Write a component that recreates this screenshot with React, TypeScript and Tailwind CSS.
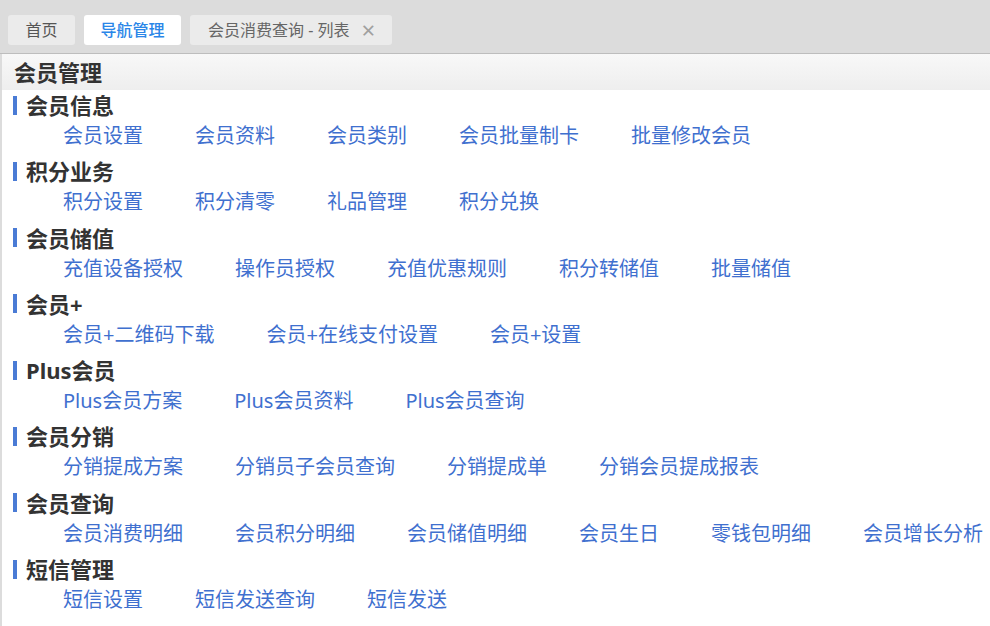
const sections: { title: string; links: string[] }[] = [
  { title: "会员信息", links: ["会员设置", "会员资料", "会员类别", "会员批量制卡", "批量修改会员"] },
  { title: "积分业务", links: ["积分设置", "积分清零", "礼品管理", "积分兑换"] },
  { title: "会员储值", links: ["充值设备授权", "操作员授权", "充值优惠规则", "积分转储值", "批量储值"] },
  { title: "会员+", links: ["会员+二维码下载", "会员+在线支付设置", "会员+设置"] },
  { title: "Plus会员", links: ["Plus会员方案", "Plus会员资料", "Plus会员查询"] },
  { title: "会员分销", links: ["分销提成方案", "分销员子会员查询", "分销提成单", "分销会员提成报表"] },
  { title: "会员查询", links: ["会员消费明细", "会员积分明细", "会员储值明细", "会员生日", "零钱包明细", "会员增长分析"] },
  { title: "短信管理", links: ["短信设置", "短信发送查询", "短信发送"] },
];

export default function App() {
  return (
    <div className="w-[990px] h-[626px] overflow-hidden bg-[#dcdcdc] flex flex-col font-['Noto_Sans','Noto_Sans_CJK_SC',sans-serif]">
      {/* tab strip */}
      <div className="h-[54px] shrink-0 flex items-start gap-[9px] pl-2 pt-[15px] border-b border-[#bdbdbd]">
        <div className="h-[30px] w-[67px] rounded-[3px] bg-[#ebebeb] flex items-center justify-center text-[16px] text-[#555]">
          首页
        </div>
        <div className="h-[30px] w-[97px] rounded-[3px] bg-white flex items-center justify-center text-[16px] font-medium text-[#2a86e8]">
          导航管理
        </div>
        <div className="h-[30px] w-[202px] rounded-[3px] bg-[#ebebeb] flex items-center pl-[18px] text-[16px] text-[#666]">
          <span>会员消费查询 - 列表</span>
          <span className="ml-[12px] text-[24px] leading-none text-[#a0a0a0]">×</span>
        </div>
      </div>

      {/* panel */}
      <div className="ml-[2px] flex-1 bg-white">
        <div className="h-[36px] pl-3 bg-gradient-to-b from-[#f8f8f8] to-[#eeeeee] text-[22px] font-bold leading-[36px] text-[#333]">
          会员管理
        </div>
        {sections.map((s) => (
          <div key={s.title} className="mb-[6.3px]">
            <div className="h-[30px] flex items-center gap-[9px] pl-[11px]">
              <span className="w-1 h-[19px] bg-[#4a7bd5]" />
              <span className="text-[22px] font-bold text-[#333] leading-none">{s.title}</span>
            </div>
            <div className="h-[30px] flex items-center gap-[52px] pl-[61px] pt-[2px] whitespace-nowrap">
              {s.links.map((l) => (
                <a key={l} href="#" className="text-[20px] leading-none text-[#3f70cf]">
                  {l}
                </a>
              ))}
            </div>
          </div>
        ))}
      </div>
    </div>
  );
}
